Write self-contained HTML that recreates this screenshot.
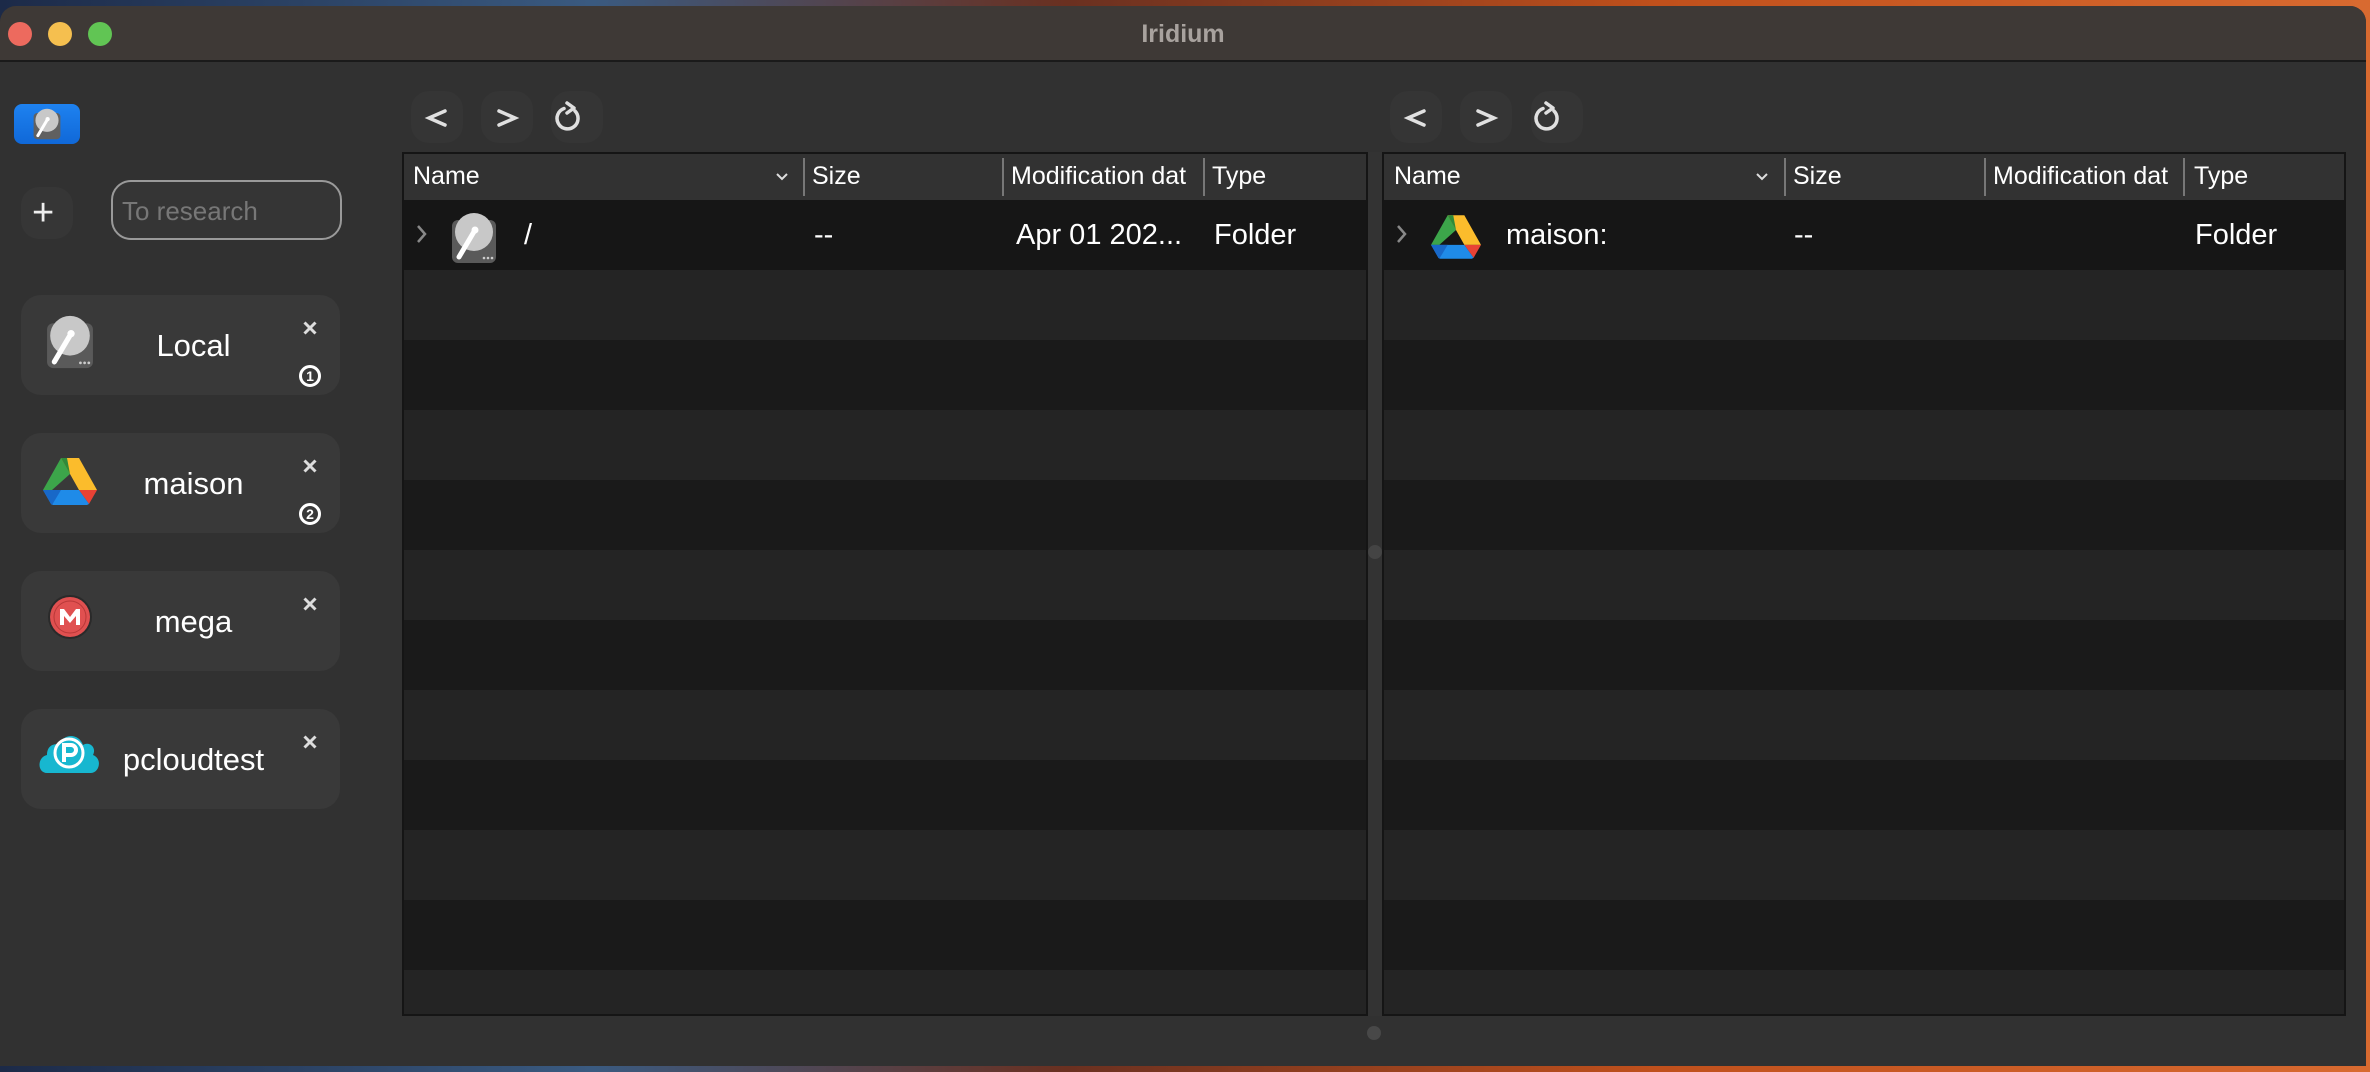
<!DOCTYPE html>
<html><head><meta charset="utf-8"><style>
*{margin:0;padding:0;box-sizing:border-box}
body{width:2370px;height:1072px;overflow:hidden;background:linear-gradient(90deg,#1c2a48 0%,#3a5a80 25%,#6a3020 45%,#c0501c 70%,#d86a30 100%);font-family:"Liberation Sans",sans-serif;position:relative}
.win{position:absolute;left:0;top:6px;width:2366px;height:1060px;background:#313131;border-radius:16px 16px 0 0;overflow:hidden}
.title{position:absolute;left:0;top:0;width:100%;height:56px;background:#3e3936;border-bottom:2px solid #1a1a1a}
.title span{position:absolute;left:0;right:0;top:14px;text-align:center;color:#a8a29e;font-weight:bold;font-size:25px}
.tl{position:absolute;top:16px;width:24px;height:24px;border-radius:50%}
.a{position:absolute}
.card{position:absolute;left:21px;width:319px;height:100px;background:#393939;border-radius:20px}
.card .t{position:absolute;left:0;width:345px;top:33px;text-align:center;color:#fff;font-size:31px}
.card .x{position:absolute;left:282px;top:26px}
.badge{position:absolute;left:278px;width:22px;height:22px;border:3px solid #fff;border-radius:50%;color:#fff;font-size:14px;font-weight:bold;text-align:center;line-height:16px}
.nb{position:absolute;top:85px;width:52px;height:52px;border-radius:18px;background:#353535}
.pane{position:absolute;top:146px;height:864px;background:#1a1a1a;border:2px solid #151515;overflow:hidden}
.hdr{position:absolute;left:0;top:0;right:0;height:46px;background:#323232}
.hdr span{position:absolute;top:8px;color:#fff;font-size:25px}
.div{position:absolute;top:4px;width:2px;height:38px;background:#777}
.row{position:absolute;left:0;right:0;height:70px}
.cell{position:absolute;color:#fff;font-size:29px}
</style></head><body>
<div class="win">
<div class="title"><div class="tl" style="left:8px;background:#ed6a5e"></div><div class="tl" style="left:48px;background:#f5bf4f"></div><div class="tl" style="left:88px;background:#61c554"></div><span>Iridium</span></div>

<div class="a" style="left:14px;top:98px;width:66px;height:40px;background:linear-gradient(#1e82f0,#1068d8);border-radius:8px"></div>
<svg class="a" style="left:33px;top:100px" width="28" height="36" viewBox="0 0 46 52"><rect x="1" y="8" width="44" height="43" rx="6" fill="#606060"/><circle cx="23" cy="20" r="19" fill="#c8c8c8"/><circle cx="24" cy="18" r="3.5" fill="#fff"/><path d="M24 18 L8 45" stroke="#fff" stroke-width="5" stroke-linecap="round"/></svg>
<div class="a" style="left:21px;top:181px;width:52px;height:52px;border-radius:18px;background:#363636"></div>
<div class="a" style="left:32px;top:192px;color:#eee;font-size:38px;line-height:30px">+</div>
<div class="a" style="left:111px;top:174px;width:231px;height:60px;border:2px solid #9a9a9a;border-radius:20px;background:#353535"></div>
<div class="a" style="left:122px;top:190px;color:#777;font-size:26px">To research</div>

<div class="card" style="top:289px"><svg class="a" style="left:25px;top:18px" width="48" height="58" viewBox="0 0 46 52"><rect x="1" y="8" width="44" height="43" rx="6" fill="#5a5a5a"/><circle cx="23" cy="20" r="19" fill="#c8c8c8"/><circle cx="24" cy="18" r="3.5" fill="#fff"/><path d="M24 18 L8 45" stroke="#fff" stroke-width="5" stroke-linecap="round"/><circle cx="33" cy="46" r="1.3" fill="#ccc"/><circle cx="37" cy="46" r="1.3" fill="#ccc"/><circle cx="41" cy="46" r="1.3" fill="#ccc"/></svg><div class="t">Local</div><svg class="x" width="14" height="14"><path d="M1.5 1.5 L12.5 12.5 M12.5 1.5 L1.5 12.5" stroke="#ddd" stroke-width="3"/></svg><div class="badge" style="top:70px">1</div></div>

<div class="card" style="top:427px"><svg class="a" style="left:22px;top:25px" width="54" height="47" viewBox="0 0 54 47"><polygon points="18,0 27,16 9,32 0,32" fill="#3ca54a"/><polygon points="18,0 36,0 54,32 36,32" fill="#fbbc2c"/><polygon points="18,0 24,0 27,16" fill="#2e8a3a"/><polygon points="36,32 54,32 46,46" fill="#e84235"/><polygon points="0,32 36,32 46,46 44,47 10,47 8,46" fill="#1f8be8"/><polygon points="0,32 18,32 9,47 8,46" fill="#1868c8"/></svg><div class="t">maison</div><svg class="x" width="14" height="14"><path d="M1.5 1.5 L12.5 12.5 M12.5 1.5 L1.5 12.5" stroke="#ddd" stroke-width="3"/></svg><div class="badge" style="top:70px">2</div></div>

<div class="card" style="top:565px"><svg class="a" style="left:26px;top:23px" width="46" height="46" viewBox="0 0 46 46"><circle cx="23" cy="23" r="22" fill="#2a2a2a"/><circle cx="23" cy="23" r="20" fill="#e05050"/><circle cx="23" cy="23" r="16" fill="none" stroke="#b83838" stroke-width="1"/><path d="M13 31 V15 H17 L23 23 L29 15 H33 V31 H29 V22 L23 29 L17 22 V31 Z" fill="#fff"/></svg><div class="t">mega</div><svg class="x" width="14" height="14"><path d="M1.5 1.5 L12.5 12.5 M12.5 1.5 L1.5 12.5" stroke="#ddd" stroke-width="3"/></svg></div>

<div class="card" style="top:703px"><svg class="a" style="left:16px;top:22px" width="64" height="42" viewBox="0 0 64 42"><path d="M10 42 C0 42 0 26 10 24 C10 14 18 12 22 14 C26 2 42 2 46 14 C52 10 60 16 56 24 C66 28 62 42 54 42 Z" fill="#17b7d0"/><circle cx="32" cy="22" r="14" fill="none" stroke="#fff" stroke-width="3"/><path d="M27 31 V14 H34 A5 5 0 0 1 34 24 H27" fill="none" stroke="#fff" stroke-width="4"/></svg><div class="t">pcloudtest</div><svg class="x" width="14" height="14"><path d="M1.5 1.5 L12.5 12.5 M12.5 1.5 L1.5 12.5" stroke="#ddd" stroke-width="3"/></svg></div>

<div class="nb" style="left:411px"></div><div class="nb" style="left:481px"></div><div class="nb" style="left:551px"></div>
<div class="nb" style="left:1390px"></div><div class="nb" style="left:1460px"></div><div class="nb" style="left:1531px"></div>
<svg class="a" style="left:411px;top:85px" width="200" height="52" viewBox="0 0 200 52"><path d="M34 20 L18 27 L34 34" fill="none" stroke="#e0e0e0" stroke-width="3.5" stroke-linecap="round"/><path d="M88 20 L104 27 L88 34" fill="none" stroke="#e0e0e0" stroke-width="3.5" stroke-linecap="round"/><path d="M153 17.5 A10.5 10.5 0 1 0 164 20" fill="none" stroke="#e0e0e0" stroke-width="3.5" stroke-linecap="round"/><path d="M156 12 L163 17 L156 22" fill="none" stroke="#e0e0e0" stroke-width="3.5" stroke-linecap="round" stroke-linejoin="round"/></svg>
<svg class="a" style="left:1390px;top:85px" width="200" height="52" viewBox="0 0 200 52"><path d="M34 20 L18 27 L34 34" fill="none" stroke="#e0e0e0" stroke-width="3.5" stroke-linecap="round"/><path d="M88 20 L104 27 L88 34" fill="none" stroke="#e0e0e0" stroke-width="3.5" stroke-linecap="round"/><path d="M153 17.5 A10.5 10.5 0 1 0 164 20" fill="none" stroke="#e0e0e0" stroke-width="3.5" stroke-linecap="round"/><path d="M156 12 L163 17 L156 22" fill="none" stroke="#e0e0e0" stroke-width="3.5" stroke-linecap="round" stroke-linejoin="round"/></svg>

<div class="pane" style="left:402px;width:966px">
<div class="row" style="top:46px;background:#161616"></div>
<div class="row" style="top:116px;background:#242424"></div><div class="row" style="top:186px;background:#1a1a1a"></div>
<div class="row" style="top:256px;background:#242424"></div><div class="row" style="top:326px;background:#1a1a1a"></div>
<div class="row" style="top:396px;background:#242424"></div><div class="row" style="top:466px;background:#1a1a1a"></div>
<div class="row" style="top:536px;background:#242424"></div><div class="row" style="top:606px;background:#1a1a1a"></div>
<div class="row" style="top:676px;background:#242424"></div><div class="row" style="top:746px;background:#1a1a1a"></div>
<div class="row" style="top:816px;background:#242424"></div>
<div class="hdr"><span style="left:9px">Name</span><svg class="a" style="left:371px;top:18px" width="14" height="10"><path d="M2 2 L7 7 L12 2" fill="none" stroke="#ddd" stroke-width="2"/></svg><div class="div" style="left:399px"></div><span style="left:408px">Size</span><div class="div" style="left:598px"></div><span style="left:607px">Modification dat</span><div class="div" style="left:799px"></div><span style="left:808px">Type</span></div>
<svg class="a" style="left:12px;top:70px" width="12" height="20"><path d="M2 2 L9 10 L2 18" fill="none" stroke="#888" stroke-width="2.5"/></svg>
<svg class="a" style="left:47px;top:58px" width="46" height="52" viewBox="0 0 46 52"><rect x="1" y="8" width="44" height="43" rx="6" fill="#5a5a5a"/><circle cx="23" cy="20" r="19" fill="#c8c8c8"/><circle cx="24" cy="18" r="3.5" fill="#fff"/><path d="M24 18 L8 45" stroke="#fff" stroke-width="5" stroke-linecap="round"/><circle cx="33" cy="46" r="1.3" fill="#ccc"/><circle cx="37" cy="46" r="1.3" fill="#ccc"/><circle cx="41" cy="46" r="1.3" fill="#ccc"/></svg>
<div class="cell" style="left:120px;top:65px">/</div><div class="cell" style="left:410px;top:65px">--</div><div class="cell" style="left:612px;top:65px">Apr 01 202...</div><div class="cell" style="left:810px;top:65px">Folder</div>
</div>

<div class="a" style="left:1368px;top:146px;width:14px;height:864px;background:#333"></div>
<div class="a" style="left:1368px;top:539px;width:14px;height:14px;border-radius:50%;background:#444"></div>
<div class="a" style="left:1367px;top:1020px;width:14px;height:14px;border-radius:50%;background:#484848"></div>

<div class="pane" style="left:1382px;width:964px">
<div class="row" style="top:46px;background:#161616"></div>
<div class="row" style="top:116px;background:#242424"></div><div class="row" style="top:186px;background:#1a1a1a"></div>
<div class="row" style="top:256px;background:#242424"></div><div class="row" style="top:326px;background:#1a1a1a"></div>
<div class="row" style="top:396px;background:#242424"></div><div class="row" style="top:466px;background:#1a1a1a"></div>
<div class="row" style="top:536px;background:#242424"></div><div class="row" style="top:606px;background:#1a1a1a"></div>
<div class="row" style="top:676px;background:#242424"></div><div class="row" style="top:746px;background:#1a1a1a"></div>
<div class="row" style="top:816px;background:#242424"></div>
<div class="hdr"><span style="left:10px">Name</span><svg class="a" style="left:371px;top:18px" width="14" height="10"><path d="M2 2 L7 7 L12 2" fill="none" stroke="#ddd" stroke-width="2"/></svg><div class="div" style="left:400px"></div><span style="left:409px">Size</span><div class="div" style="left:600px"></div><span style="left:609px">Modification dat</span><div class="div" style="left:799px"></div><span style="left:810px">Type</span></div>
<svg class="a" style="left:12px;top:70px" width="12" height="20"><path d="M2 2 L9 10 L2 18" fill="none" stroke="#888" stroke-width="2.5"/></svg>
<svg class="a" style="left:47px;top:61px" width="50" height="44" viewBox="0 0 54 47"><polygon points="18,0 27,16 9,32 0,32" fill="#3ca54a"/><polygon points="18,0 36,0 54,32 36,32" fill="#fbbc2c"/><polygon points="18,0 24,0 27,16" fill="#2e8a3a"/><polygon points="36,32 54,32 46,46" fill="#e84235"/><polygon points="0,32 36,32 46,46 44,47 10,47 8,46" fill="#1f8be8"/><polygon points="0,32 18,32 9,47 8,46" fill="#1868c8"/></svg>
<div class="cell" style="left:122px;top:65px">maison:</div><div class="cell" style="left:410px;top:65px">--</div><div class="cell" style="left:811px;top:65px">Folder</div>
</div>
</div>
</body></html>
